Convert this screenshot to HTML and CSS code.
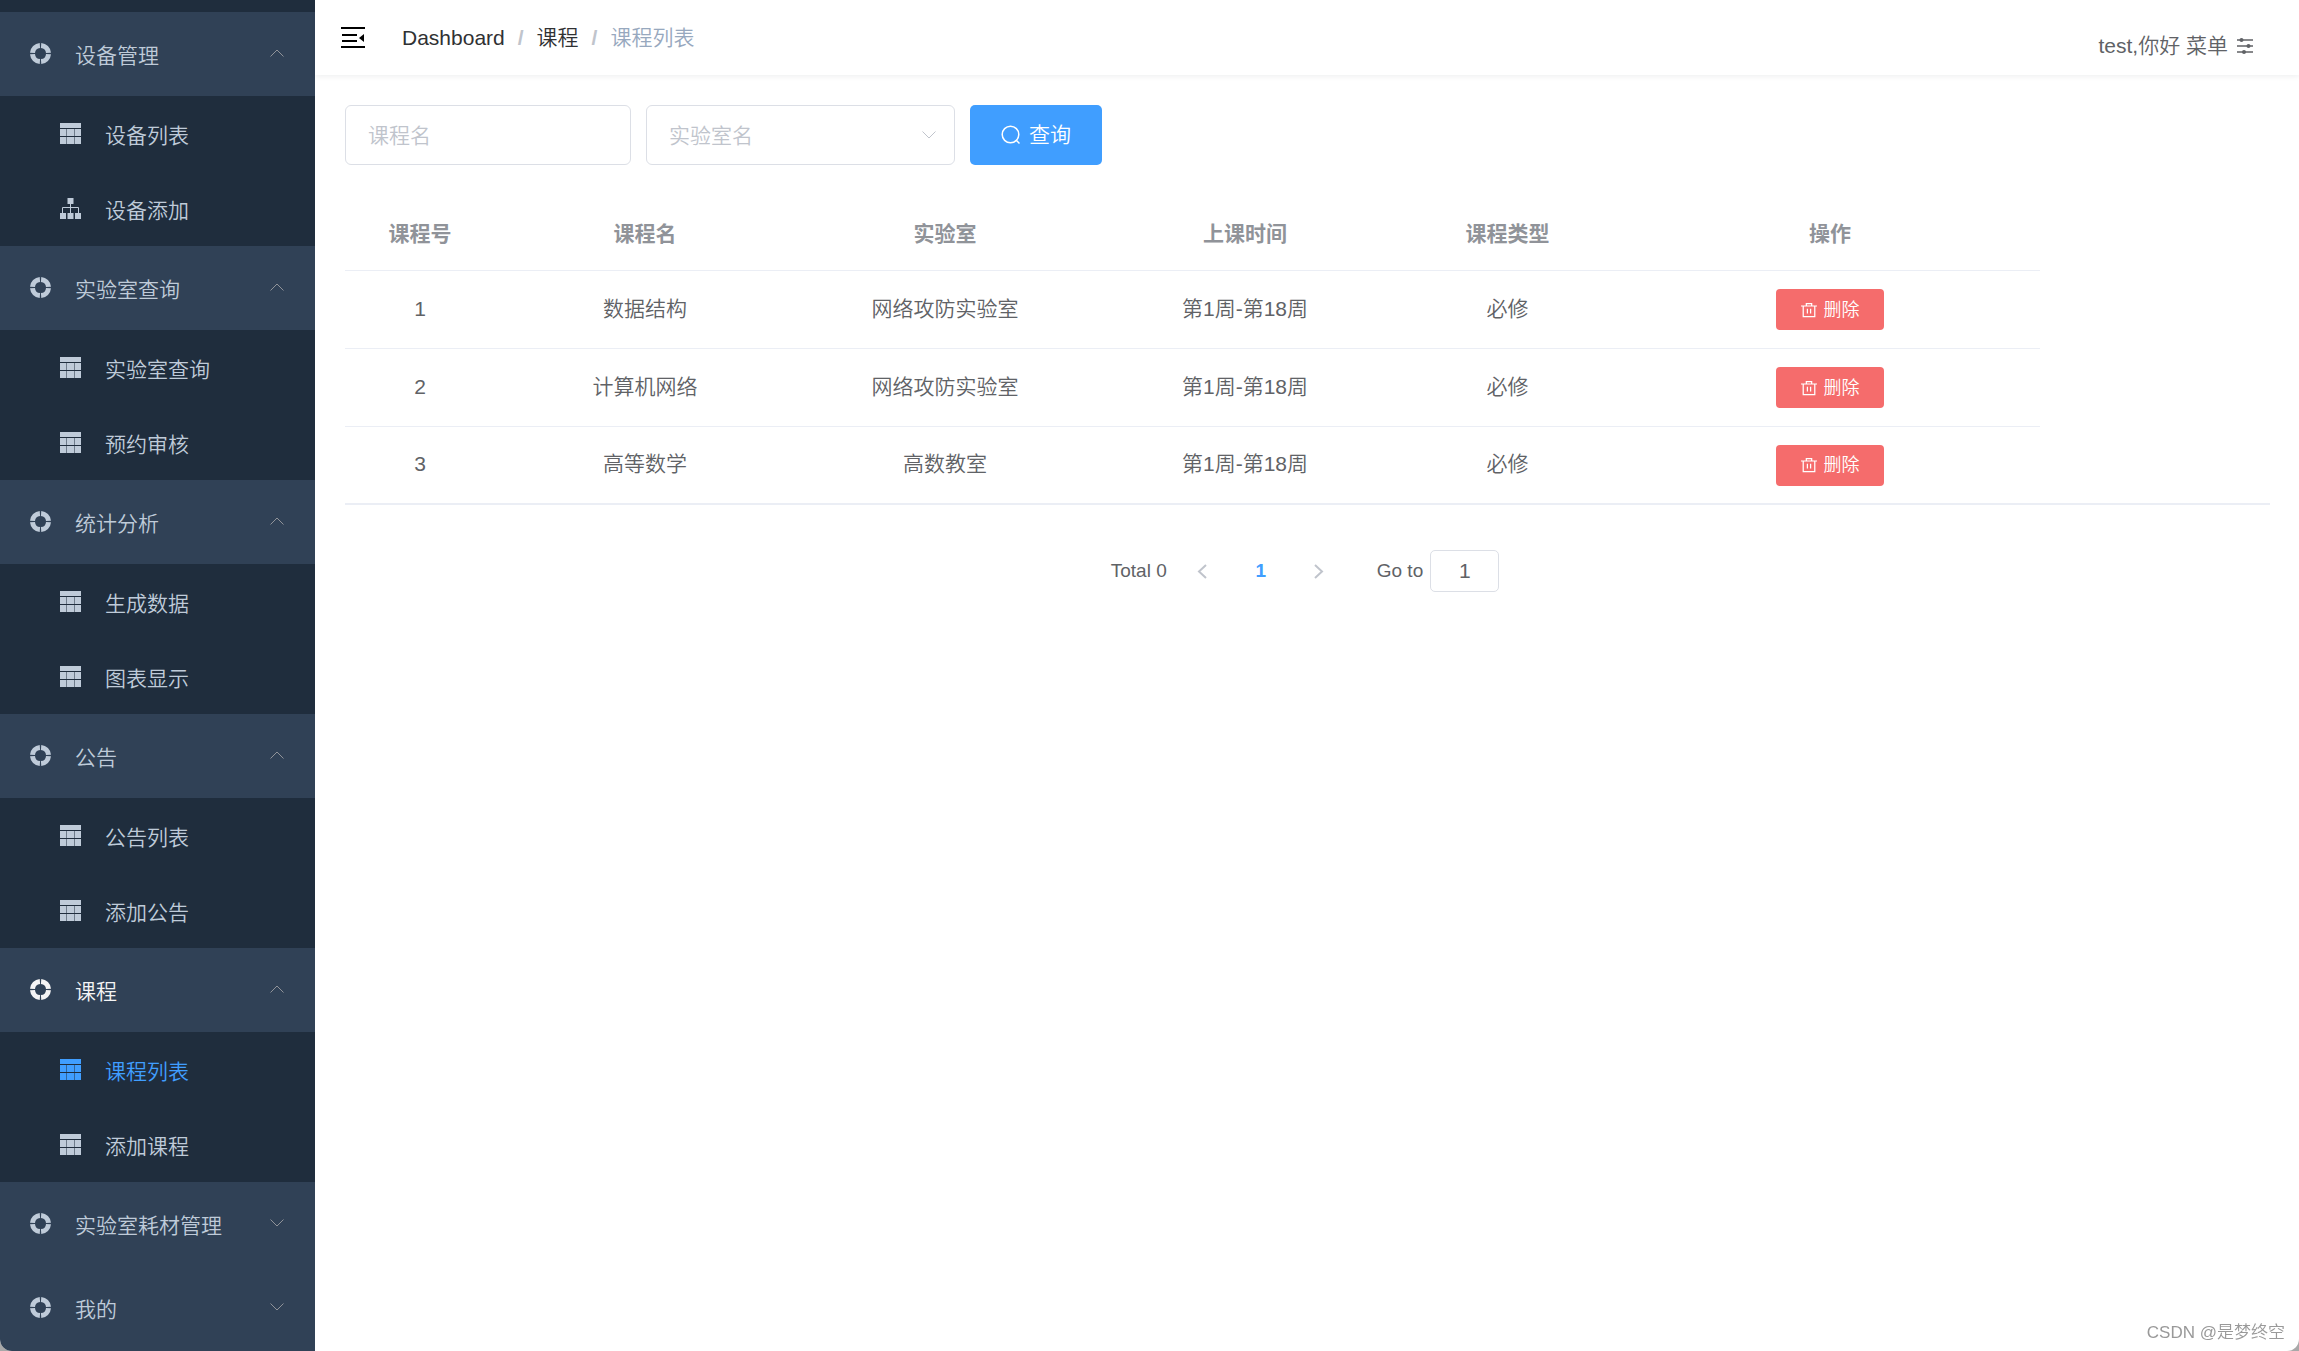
FILE: index.html
```html
<!DOCTYPE html>
<html lang="zh-CN">
<head>
<meta charset="utf-8">
<meta name="viewport" content="width=device-width, initial-scale=1">
<title>课程列表</title>
<link rel="stylesheet" href="styles.css">
</head>
<body>
<svg class="sprite" aria-hidden="true">
  <symbol id="ring" viewBox="0 0 21 21">
    <g fill="none" stroke="currentColor" stroke-width="5">
      <path d="M11.1 2.5A8 8 0 0 1 18.5 9.9M18.5 11.100A8 8 0 0 1 11.1 18.5M9.900 18.5A8 8 0 0 1 2.5 11.1M2.5 9.9A8 8 0 0 1 9.9 2.5"/>
    </g>
  </symbol>
  <symbol id="grid" viewBox="0 0 21 21">
    <path fill="currentColor" d="M0 0h21v5H0zM0 6h6.500v7H0zM7 6h7v7H7zM14.500 6H21v7h-6.500zM0 14h6.500v7H0zM7 14h7v7H7zM14.500 14H21v7h-6.500z"/>
  </symbol>
  <symbol id="tree" viewBox="0 0 21 21">
    <path fill="currentColor" d="M7.500 0h6v6h-6zM0 15h6v6H0zM7.500 15h6v6h-6zM15 15h6v6h-6z"/>
    <path fill="none" stroke="currentColor" d="M10.500 6v9M2.500 15V9.500h16V15"/>
  </symbol>
  <symbol id="chevron" viewBox="0 0 16 16">
    <path fill="none" stroke="currentColor" d="M1.500 4.500L8 11l6.500-6.500"/>
  </symbol>
  <symbol id="trash" viewBox="0 0 18 18">
    <path fill="none" stroke="currentColor" stroke-width="1.400" d="M0 4.500h18M6 4V1.700h6V4M2.500 4.500v12h13v-12M7.200 7.500V13M10.800 7.500V13"/>
  </symbol>
</svg>
<div class="layout">
  <nav class="sidebar" aria-label="主菜单">
    <section class="group">
      <button type="button" class="group-title" aria-expanded="true"><svg class="icon"><use href="#ring"/></svg><span>设备管理</span><svg class="arrow"><use href="#chevron"/></svg></button>
      <ul class="submenu">
        <li><a href="#devices"><svg class="icon"><use href="#grid"/></svg><span>设备列表</span></a></li>
        <li><a href="#device-add"><svg class="icon"><use href="#tree"/></svg><span>设备添加</span></a></li>
      </ul>
    </section>
    <section class="group">
      <button type="button" class="group-title" aria-expanded="true"><svg class="icon"><use href="#ring"/></svg><span>实验室查询</span><svg class="arrow"><use href="#chevron"/></svg></button>
      <ul class="submenu">
        <li><a href="#labs"><svg class="icon"><use href="#grid"/></svg><span>实验室查询</span></a></li>
        <li><a href="#review"><svg class="icon"><use href="#grid"/></svg><span>预约审核</span></a></li>
      </ul>
    </section>
    <section class="group">
      <button type="button" class="group-title" aria-expanded="true"><svg class="icon"><use href="#ring"/></svg><span>统计分析</span><svg class="arrow"><use href="#chevron"/></svg></button>
      <ul class="submenu">
        <li><a href="#data"><svg class="icon"><use href="#grid"/></svg><span>生成数据</span></a></li>
        <li><a href="#charts"><svg class="icon"><use href="#grid"/></svg><span>图表显示</span></a></li>
      </ul>
    </section>
    <section class="group">
      <button type="button" class="group-title" aria-expanded="true"><svg class="icon"><use href="#ring"/></svg><span>公告</span><svg class="arrow"><use href="#chevron"/></svg></button>
      <ul class="submenu">
        <li><a href="#notices"><svg class="icon"><use href="#grid"/></svg><span>公告列表</span></a></li>
        <li><a href="#notice-add"><svg class="icon"><use href="#grid"/></svg><span>添加公告</span></a></li>
      </ul>
    </section>
    <section class="group">
      <button type="button" class="group-title is-open" aria-expanded="true"><svg class="icon"><use href="#ring"/></svg><span>课程</span><svg class="arrow"><use href="#chevron"/></svg></button>
      <ul class="submenu">
        <li><a class="is-active" href="#courses" aria-current="page"><svg class="icon"><use href="#grid"/></svg><span>课程列表</span></a></li>
        <li><a href="#course-add"><svg class="icon"><use href="#grid"/></svg><span>添加课程</span></a></li>
      </ul>
    </section>
    <section class="group">
      <button type="button" class="group-title" aria-expanded="false"><svg class="icon"><use href="#ring"/></svg><span>实验室耗材管理</span><svg class="arrow"><use href="#chevron"/></svg></button>
    </section>
    <section class="group">
      <button type="button" class="group-title" aria-expanded="false"><svg class="icon"><use href="#ring"/></svg><span>我的</span><svg class="arrow"><use href="#chevron"/></svg></button>
    </section>
  </nav>

  <div class="page">
    <header class="navbar">
      <button type="button" class="toggle" aria-label="收起菜单">
        <svg viewBox="0 0 24 22"><path fill="none" stroke="#000" stroke-width="2" d="M0 1h24M1 8h15M1 14h15M0 20h24"/><path d="M18 11l5-4v8z"/></svg>
      </button>
      <ol class="breadcrumb">
        <li><a href="#dashboard">Dashboard</a></li>
        <li><a href="#course">课程</a></li>
        <li><span class="current">课程列表</span></li>
      </ol>
      <button type="button" class="user">test,你好 菜单
        <svg viewBox="0 0 18 18"><path fill="none" stroke="currentColor" stroke-width="1.500" d="M1 3h16M1 9h16M1 15h16"/><g fill="currentColor"><circle cx="5.500" cy="3" r="2"/><circle cx="12.500" cy="9" r="2"/><circle cx="8" cy="15" r="2"/></g></svg>
      </button>
    </header>

    <main class="content">
      <form class="filters">
        <input class="field" type="text" placeholder="课程名" aria-label="课程名">
        <div class="select">
          <select class="field" aria-label="实验室名"><option>实验室名</option></select>
          <svg><use href="#chevron"/></svg>
        </div>
        <button type="button" class="search"><svg viewBox="0 0 20 20"><g fill="none" stroke="currentColor" stroke-width="1.500"><circle cx="9.500" cy="9.500" r="8.300"/><path d="M15 15l3.500 3.500"/></g></svg>查询</button>
      </form>

      <div class="table-wrap">
        <table>
          <colgroup><col class="w-id"><col class="w-text"><col class="w-text"><col class="w-text"><col class="w-type"><col class="w-action"></colgroup>
          <thead>
            <tr><th>课程号</th><th>课程名</th><th>实验室</th><th>上课时间</th><th>课程类型</th><th>操作</th></tr>
          </thead>
          <tbody>
            <tr><td>1</td><td>数据结构</td><td>网络攻防实验室</td><td>第1周-第18周</td><td>必修</td><td><button type="button" class="delete"><svg><use href="#trash"/></svg>删除</button></td></tr>
            <tr><td>2</td><td>计算机网络</td><td>网络攻防实验室</td><td>第1周-第18周</td><td>必修</td><td><button type="button" class="delete"><svg><use href="#trash"/></svg>删除</button></td></tr>
            <tr><td>3</td><td>高等数学</td><td>高数教室</td><td>第1周-第18周</td><td>必修</td><td><button type="button" class="delete"><svg><use href="#trash"/></svg>删除</button></td></tr>
          </tbody>
        </table>
      </div>

      <div class="pagination">
        <span>Total 0</span>
        <button type="button" class="pager prev" aria-label="上一页" disabled><svg viewBox="0 0 17 17"><path fill="none" stroke="currentColor" stroke-width="2" d="M12 2L5 8.500l7 6.500"/></svg></button>
        <button type="button" class="pager current-page">1</button>
        <button type="button" class="pager next" aria-label="下一页" disabled><svg viewBox="0 0 17 17"><path fill="none" stroke="currentColor" stroke-width="2" d="M5 2l7 6.500L5 15"/></svg></button>
        <label class="jump">Go to <input type="text" inputmode="numeric" value="1"></label>
      </div>
    </main>
  </div>
</div>
<div class="watermark">CSDN @是梦终空</div>
</body>
</html>
```
FILE: styles.css
```css
* { box-sizing: border-box; }

html { background: #a8a8a8; }

body {
  margin: 0;
  color: #606266;
  font: 350 21px/30px "Liberation Sans", "Noto Sans CJK SC", sans-serif;
}

button, input, select { font: inherit; color: inherit; }
button { padding: 0; border: 0; background: none; }
a { color: inherit; text-decoration: none; }
ul, ol { margin: 0; padding: 0; list-style: none; }
svg { display: block; flex: none; }
.sprite { position: absolute; width: 0; height: 0; }

.layout {
  display: flex;
  min-height: 100vh;
  overflow: hidden;
  border-radius: 0 0 12px 12px;
  background: #fff;
}

/* Sidebar */
.sidebar {
  flex: none;
  width: 315px;
  border-top: 12px solid #1f2d3d;
  background: #304156;
  color: #bfcbd9;
}
.group-title, .submenu a {
  display: flex;
  align-items: center;
  gap: 24px;
  width: 100%;
  height: 84px;
  padding: 0 30px 2px;
  text-align: left;
}
.submenu { background: #1f2d3d; }
.submenu a { height: 75px; padding: 0 60px; }
.sidebar span { padding-top: 4px; }
.group-title span { padding-top: 6px; }
.icon { width: 21px; height: 21px; }
.is-open { color: #f4f4f5; }
.submenu .is-active { color: #409eff; }
.arrow {
  width: 16px;
  height: 16px;
  margin-left: auto;
  color: #909399;
}
[aria-expanded="true"] .arrow { transform: rotate(180deg); }

/* Top bar */
.page { flex: 1; min-width: 0; }
.navbar {
  display: flex;
  align-items: center;
  height: 75px;
  padding: 0 45px 0 26px;
  box-shadow: 0 1px 6px rgba(0, 21, 41, .08);
}
.toggle svg { width: 24px; height: 22px; }
.breadcrumb { display: flex; margin-left: 37px; color: #303133; }
.breadcrumb li + li::before {
  content: "/";
  margin: 0 13px;
  color: #c0c4cc;
  font-weight: 700;
}
.breadcrumb .current { color: #97a8be; }
.user {
  display: flex;
  align-items: center;
  gap: 8px;
  margin-left: auto;
  padding-top: 16px;
}
.user svg { width: 18px; height: 18px; }

/* Filters */
.content { padding: 30px 29px 30px 30px; }
.filters { display: flex; gap: 15px; }
.field {
  width: 286px;
  height: 60px;
  padding: 2px 22px 0;
  border: 1px solid #dcdfe6;
  border-radius: 6px;
  background: #fff;
}
.field::placeholder { color: #c0c4cc; opacity: 1; }
.select { display: grid; align-items: center; color: #c0c4cc; }
.select .field { grid-area: 1 / 1; width: 309px; appearance: none; }
.select svg {
  grid-area: 1 / 1;
  justify-self: end;
  width: 16px;
  height: 16px;
  margin-right: 18px;
  pointer-events: none;
}
.search {
  display: flex;
  align-items: center;
  justify-content: center;
  gap: 8px;
  width: 132px;
  border-radius: 5px;
  background: #409eff;
  color: #fff;
}
.search svg { width: 20px; height: 20px; }

/* Table */
.table-wrap { margin-top: 30px; border-bottom: 2px solid #ebeef5; }
table { width: 1695px; table-layout: fixed; border-collapse: separate; border-spacing: 0; }
.w-id { width: 150px; }
.w-text { width: 300px; }
.w-type { width: 225px; }
.w-action { width: 420px; }
th, td { height: 78px; padding: 0 0 2px; border-bottom: 1px solid #ebeef5; text-align: center; }
th { height: 76px; padding: 3px 0 0; color: #909399; font-weight: 700; }
tbody tr:last-child td { height: 76px; border-bottom: 0; }
.delete {
  display: flex;
  align-items: center;
  justify-content: center;
  gap: 7px;
  width: 108px;
  height: 41px;
  margin: 2px auto 0;
  border-radius: 4px;
  background: #f56c6c;
  color: #fff;
  font-size: 18px;
}
.delete svg { width: 16px; height: 16px; }

/* Pagination */
.pagination {
  display: flex;
  align-items: center;
  justify-content: center;
  margin-top: 45px;
  padding-right: 5px;
  font-size: 19px;
}
.pager { display: grid; place-items: center; width: 58px; height: 41px; color: #c0c4cc; }
.prev { margin-left: 7px; }
.pager svg { width: 17px; height: 17px; }
.current-page { color: #409eff; font-weight: 700; }
.jump { display: flex; align-items: center; gap: 7px; margin-left: 29px; }
.jump input {
  width: 69px;
  height: 42px;
  border: 1px solid #dcdfe6;
  border-radius: 5px;
  text-align: center;
  font-size: 21px;
}

.watermark {
  position: fixed;
  right: 14px;
  bottom: 3px;
  color: #999;
  font-size: 17px;
}
```
